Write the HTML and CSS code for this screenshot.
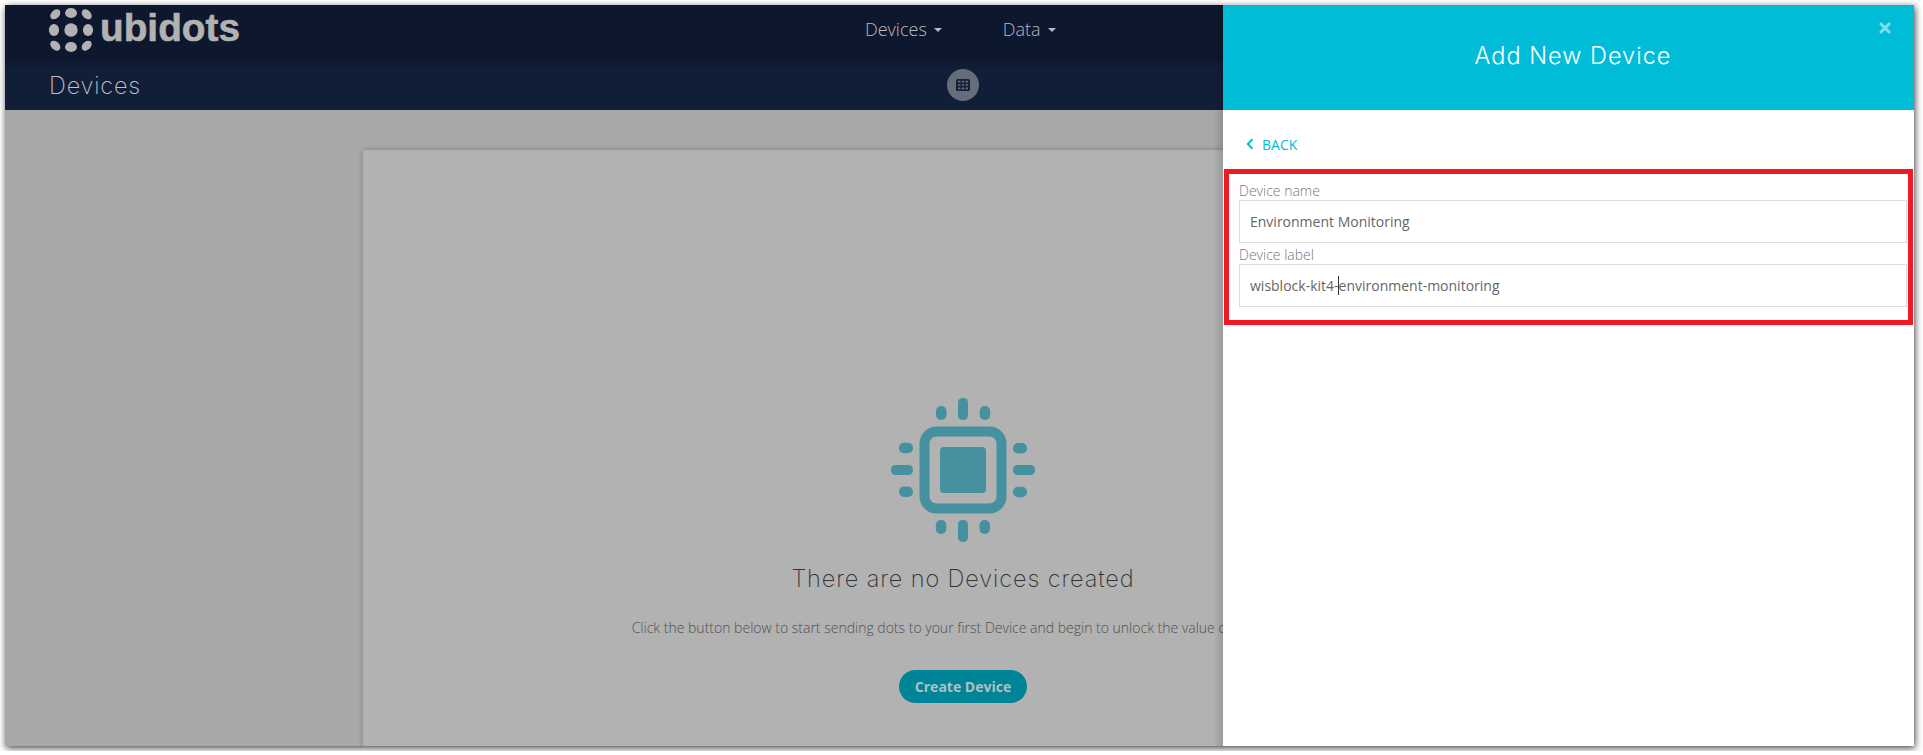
FILE: index.html
```html
<!DOCTYPE html>
<html lang="en">
<head>
<meta charset="utf-8">
<title>Devices</title>
<link rel="stylesheet" href="styles.css">
</head>
<body>
<div class="window">
  <div class="page">
    <header class="topbar">
      <svg class="logo" viewBox="0 0 200 50" width="200" height="50" fill="#b2b2b2">
        <g transform="translate(27 25)">
          <circle r="6.7"/>
          <ellipse cy="-17" rx="6" ry="5.1"/>
          <ellipse cy="17" rx="6" ry="5.1"/>
          <ellipse cx="-17" rx="5.1" ry="6"/>
          <ellipse cx="17" rx="5.1" ry="6"/>
          <ellipse rx="5.8" ry="4.1" transform="translate(-15.7 -15.7) rotate(-45)"/>
          <ellipse rx="5.8" ry="4.1" transform="translate(15.7 -15.7) rotate(45)"/>
          <ellipse rx="5.8" ry="4.1" transform="translate(-15.7 15.7) rotate(45)"/>
          <ellipse rx="5.8" ry="4.1" transform="translate(15.7 15.7) rotate(-45)"/>
        </g>
        <text class="wordmark" x="56" y="35.5" textLength="140" lengthAdjust="spacingAndGlyphs">ubidots</text>
      </svg>
      <nav class="menu">
        <a class="menu-item">Devices<i class="caret"></i></a>
        <a class="menu-item">Data<i class="caret"></i></a>
      </nav>
    </header>
    <div class="subbar">
      <h1 class="title">Devices</h1>
      <span class="view-toggle">
        <svg width="14" height="12" viewBox="0 0 14 12"><rect width="14" height="12" rx="1.5" fill="#152039"/><path d="M2 2.6h2.4M5.8 2.6h2.4M9.6 2.6H12M2 6h2.4M5.8 6h2.4M9.6 6H12M2 9.4h2.4M5.8 9.4h2.4M9.6 9.4H12" stroke="#656c7b" stroke-width="1.7"/></svg>
      </span>
    </div>
    <main class="content">
      <section class="card">
        <svg class="chip" width="146" height="146" viewBox="-73 -73 146 146" fill="#4591a0">
          <rect x="-38.5" y="-38.5" width="77" height="77" rx="12" fill="none" stroke="#4591a0" stroke-width="10"/>
          <rect x="-23" y="-23" width="46" height="46" rx="4"/>
          <g id="pins">
            <rect x="-5" y="-72" width="10" height="22" rx="4.5"/>
            <rect x="-27" y="-64" width="10.5" height="14" rx="5"/>
            <rect x="16.7" y="-64" width="10.5" height="14" rx="5"/>
          </g>
          <use href="#pins" transform="rotate(90)"/>
          <use href="#pins" transform="rotate(180)"/>
          <use href="#pins" transform="rotate(270)"/>
        </svg>
        <h2 class="empty-title"><span>There are no Devices created</span></h2>
        <p class="empty-text">Click the button below to start sending dots to your first Device and begin to unlock the value of your data</p>
        <button class="create">Create Device</button>
      </section>
    </main>
  </div>
  <aside class="panel">
    <div class="panel-head">
      <h2 class="panel-title"><span>Add New Device</span></h2>
      <svg class="close" width="12" height="12" viewBox="0 0 12 12"><path d="M2 2l8 8M10 2l-8 8" stroke="#80deeb" stroke-width="3.1" stroke-linecap="round"/></svg>
    </div>
    <a class="back"><svg width="8" height="12" viewBox="0 0 8 12"><path d="M6.5 1.2L1.8 6l4.7 4.8" fill="none" stroke="#00bcd7" stroke-width="2"/></svg>BACK</a>
    <form class="fields">
      <label class="label">Device name</label>
      <div class="input">Environment Monitoring</div>
      <label class="label">Device label</label>
      <div class="input">wisblock-kit4-<i class="cursor"></i>environment-monitoring</div>
    </form>
  </aside>
</div>
</body>
</html>
```
FILE: styles.css
```css
* { box-sizing: border-box; }
body { margin: 0; background: #fff; overflow: hidden; font-family: "Open Sans", sans-serif; }
h1, h2, p { margin: 0; font-weight: 300; }
.window { display: flex; width: 1909px; height: 741px; margin: 5px; box-shadow: 1px 2px 7px rgba(0,0,0,.75); }
.page { width: 1218px; height: 741px; overflow: hidden; position: relative; background: #a8a8a8; }
.page::after { content: ""; position: absolute; top: 0; right: 0; width: 10px; height: 100%; background: linear-gradient(to right, rgba(0,0,0,0), rgba(0,0,0,.14)); }
.topbar { display: flex; height: 56px; background: #0d172e; }
.logo { margin-left: 39px; flex: none; }
.wordmark { font: bold 39px "Liberation Sans", sans-serif; stroke: #b2b2b2; stroke-width: .6; }
.menu { display: flex; gap: 61px; margin-left: 621px; padding-top: 11px; }
.menu-item { display: flex; align-items: center; height: 25px; font-size: 18px; font-weight: 300; color: #b8bac0; }
.caret { margin: 2px 0 0 7px; border: 4px solid transparent; border-top-color: #b8bac0; border-bottom: 0; }
.subbar { display: flex; align-items: center; height: 49px; padding-bottom: 1px; background: linear-gradient(#0f1a33, #111e38 8px); }
.title { width: 898px; padding: 2px 0 0 44px; font: 200 23.5px/30px Inter, sans-serif; letter-spacing: .8px; color: #c0c2c6; }
.view-toggle { display: grid; place-items: center; width: 32px; height: 32px; margin-left: 44px; border-radius: 50%; background: #656c7b; }
.content { padding: 40px 0 0 358px; }
.card { display: flex; flex-direction: column; align-items: center; width: 1200px; height: 640px; padding-top: 247px; background: #b2b2b2; box-shadow: 0 0 5px rgba(0,0,0,.25); }
.chip { flex: none; }
.empty-title { margin-top: 21px; font: 200 23.5px/30px Inter, sans-serif; letter-spacing: .9px; color: #333; }
.empty-text { margin-top: 24px; font-size: 14px; line-height: 20px; color: #505050; white-space: nowrap; }
.create { width: 128px; height: 33px; margin-top: 32px; padding: 0; border: 0; border-radius: 17px; background: #008497; color: #b2c0c3; font: bold 14px "Open Sans", sans-serif; }
.panel { width: 691px; background: #fff; }
.panel-head { position: relative; height: 105px; padding-top: 36px; text-align: center; background: #00bcd7; }
.panel-title { padding-left: 9px; font: 300 23.5px/30px Inter, sans-serif; letter-spacing: 1px; color: #fff; }
.close { position: absolute; right: 23px; top: 17px; }
.back { display: flex; align-items: center; gap: 8px; height: 20px; margin: 24px 0 0 23px; font-size: 14px; color: #00bcd7; }
.fields { display: block; width: 689px; height: 156px; margin: 15px 0 0 1px; padding: 9px 1px 0 10px; border: 5px solid #ee1b24; }
.label { display: block; height: 17px; font-size: 14px; font-weight: 300; line-height: 15px; color: #777; }
.input { display: flex; align-items: center; height: 43px; margin-bottom: 4px; padding: 0 0 0 10px; border: 1px solid #ddd; font-size: 14px; color: #666; }
.cursor { width: 1px; height: 19px; margin: 0 0 0 -1px; background: #333; }
```
